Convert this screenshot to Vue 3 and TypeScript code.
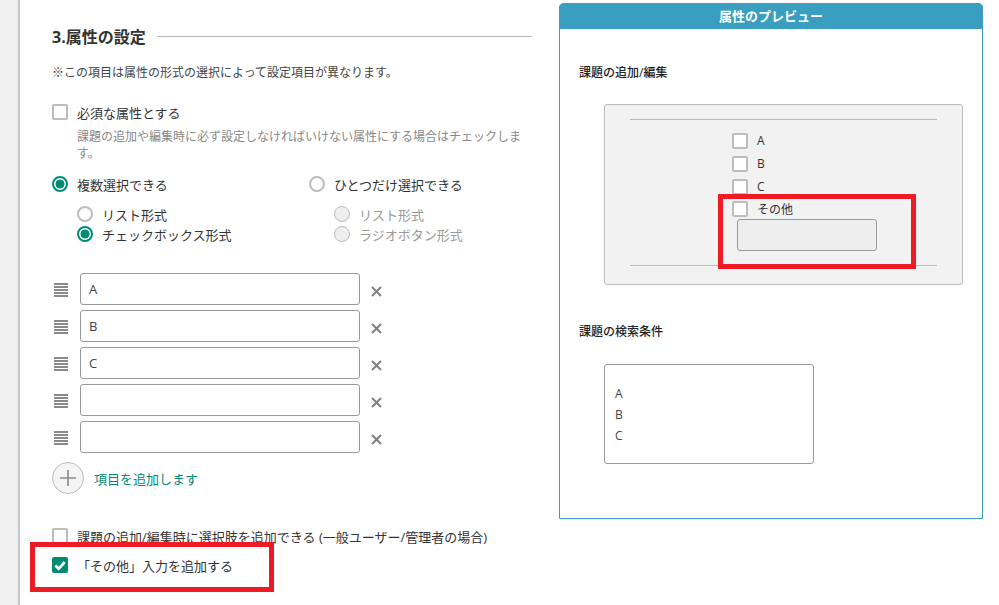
<script setup lang="ts">
const items: string[] = ['A', 'B', 'C', '', '']
const previewItems: string[] = ['A', 'B', 'C']
</script>

<template>
  <div class="page">
    <aside class="rail"></aside>
    <main class="left">
      <div class="heading"><h2>3.属性の設定</h2><span class="rule"></span></div>
      <p class="note">※この項目は属性の形式の選択によって設定項目が異なります。</p>

      <label class="row required"><span class="check"></span><span>必須な属性とする</span></label>
      <p class="desc">課題の追加や編集時に必ず設定しなければいけない属性にする場合はチェックします。</p>

      <div class="modes">
        <div class="mode">
          <div class="row"><span class="radio on"></span><span>複数選択できる</span></div>
          <div class="subs">
            <div class="row"><span class="radio"></span><span>リスト形式</span></div>
            <div class="row"><span class="radio on"></span><span>チェックボックス形式</span></div>
          </div>
        </div>
        <div class="mode">
          <div class="row"><span class="radio"></span><span>ひとつだけ選択できる</span></div>
          <div class="subs disabled">
            <div class="row"><span class="radio off"></span><span>リスト形式</span></div>
            <div class="row"><span class="radio off"></span><span>ラジオボタン形式</span></div>
          </div>
        </div>
      </div>

      <div class="items">
        <div v-for="(item, i) in items" :key="i" class="item">
          <svg class="grip" width="14" height="14" viewBox="0 0 14 14">
            <path d="M0 1h14M0 4h14M0 7h14M0 10h14M0 13h14" stroke="#8a8a8a" stroke-width="2" fill="none" />
          </svg>
          <div class="input">{{ item }}</div>
          <svg class="remove" width="11" height="11" viewBox="0 0 11 11">
            <path d="M1 1l9 9M10 1l-9 9" stroke="#808080" stroke-width="2" fill="none" />
          </svg>
        </div>
      </div>

      <div class="add">
        <span class="plus">
          <svg width="18" height="18" viewBox="0 0 18 18"><path d="M9 1v16M1 9h16" stroke="#8a8a8a" stroke-width="1.6" fill="none" /></svg>
        </span>
        <span class="add-text">項目を追加します</span>
      </div>

      <label class="row option"><span class="check"></span><span>課題の追加/編集時に選択肢を追加できる (一般ユーザー/管理者の場合)</span></label>
      <label class="row option2">
        <span class="check checked">
          <svg width="13" height="11" viewBox="0 0 13 11"><path d="M1.5 5.5l3.6 3.6L11.5 1.8" stroke="#fff" stroke-width="3" fill="none" /></svg>
        </span>
        <span>「その他」入力を追加する</span>
      </label>
      <div class="mark mark-left"></div>
    </main>

    <section class="preview">
      <header>属性のプレビュー</header>
      <div class="preview-body">
        <h3>課題の追加/編集</h3>
        <div class="edit-box">
          <div class="edit-inner">
            <div class="preview-checks">
              <div v-for="p in previewItems" :key="p" class="pcheck"><span class="check"></span><span>{{ p }}</span></div>
              <div class="pcheck other"><span class="check"></span><span>その他</span></div>
              <div class="other-input"></div>
            </div>
          </div>
          <div class="mark mark-right"></div>
        </div>
        <h3 class="second">課題の検索条件</h3>
        <div class="list-box">
          <div v-for="p in previewItems" :key="p" class="list-item">{{ p }}</div>
        </div>
      </div>
    </section>
  </div>
</template>

<style>
html, body { margin: 0; background: #fff; }
</style>

<style scoped>
.page {
  display: flex;
  width: 999px;
  height: 605px;
  overflow: hidden;
  position: relative;
  font-family: "Open Sans", "Noto Sans CJK JP", sans-serif;
  font-size: 13px;
  color: #333;
  background: #fff;
}
.rail { width: 18px; background: #f0f0f0; border-right: 2px solid #c8c8c8; flex: none; }
.left { width: 480px; margin-left: 32px; flex: none; position: relative; padding-top: 25px; }
.heading { display: flex; align-items: center; gap: 11px; height: 22px; }
.heading h2 { margin: 0; font-size: 16px; font-weight: 700; color: #333; white-space: nowrap; }
.rule { flex: 1; height: 1px; background: #b8b8b8; }
.note { margin: 17px 0 0; font-size: 12px; line-height: 18px; color: #444; }
.row { display: flex; align-items: center; gap: 9px; }
.required { margin-top: 21px; height: 18px; }
.desc { margin: 7px 0 0 25px; font-size: 12px; line-height: 17px; color: #888; }
.check {
  width: 16px; height: 16px; box-sizing: border-box; flex: none;
  border: 2px solid #bdbdbd; border-radius: 2px; background: #fff;
  display: inline-flex; align-items: center; justify-content: center;
}
.check.checked { background: #008c72; border-color: #008c72; }
.radio {
  width: 16px; height: 16px; box-sizing: border-box; flex: none;
  border: 2px solid #bdbdbd; border-radius: 50%; background: #fff;
}
.radio.on { border-color: #008c72; background: radial-gradient(circle, #008c72 0 4.2px, #fff 4.8px); }
.radio.off { border: 1px solid #bdbdbd; background: #eee; }
.modes { display: flex; margin-top: 13px; }
.mode { width: 257px; flex: none; }
.mode > .row { height: 18px; }
.subs { margin: 12px 0 0 25px; display: flex; flex-direction: column; gap: 2px; }
.subs .row { height: 18px; }
.disabled { color: #999; }
.items { margin-top: 30px; display: flex; flex-direction: column; gap: 5px; }
.item { display: flex; align-items: center; height: 32px; }
.grip { margin-left: 2px; margin-top: 2px; flex: none; }
.input {
  width: 280px; height: 32px; box-sizing: border-box; margin-left: 12px;
  border: 1px solid #999; border-radius: 3px; padding: 0 8px;
  line-height: 31px; font-size: 13px; color: #444; background: #fff;
}
.remove { margin-left: 11px; margin-top: 4px; flex: none; }
.add { display: flex; align-items: center; gap: 10px; margin-top: 9px; height: 32px; }
.plus {
  width: 32px; height: 32px; box-sizing: border-box; border-radius: 50%;
  border: 1px solid #bdbdbd; background: #f4f4f4;
  display: inline-flex; align-items: center; justify-content: center;
}
.add-text { color: #008c72; }
.option { margin-top: 33px; height: 18px; white-space: nowrap; }
.option2 { margin-top: 11px; height: 18px; }
.mark { position: absolute; border: 5px solid #ed1c24; box-sizing: border-box; pointer-events: none; }
.mark-left { left: -22px; top: 542px; width: 244px; height: 50px; }
.preview {
  position: absolute; left: 559px; top: 3px; width: 424px; height: 516px;
  box-sizing: border-box; border: 1px solid #3a9ec0; border-radius: 5px 5px 0 0;
}
.preview header {
  margin: -1px -1px 0; height: 26px; background: #3a9ec0; color: #fff;
  border-radius: 5px 5px 0 0; text-align: center; font-size: 13px; font-weight: 700; line-height: 26px;
}
.preview-body { padding: 35px 19px 0 19px; }
.preview h3 { margin: 0; font-size: 12px; font-weight: 500; line-height: 18px; color: #222; }
.edit-box {
  position: relative; margin: 22px 0 0 25px; width: 359px; height: 181px; box-sizing: border-box;
  border: 1px solid #bdbdbd; border-radius: 3px; background: #f2f2f2; padding: 14px 25px 0;
}
.edit-inner {
  height: 147px; box-sizing: border-box;
  border-top: 1px solid #bdbdbd; border-bottom: 1px solid #bdbdbd; padding-top: 9px;
}
.preview-checks { margin-left: 102px; }
.pcheck { display: flex; align-items: center; gap: 9px; height: 23px; font-size: 12px; }
.other { height: 21px; }
.other-input {
  width: 140px; height: 32px; box-sizing: border-box; margin: 0 0 0 5px;
  border: 1px solid #999; border-radius: 3px; background: #eee;
}
.mark-right { left: 113px; top: 89px; width: 198px; height: 75px; }
.second { margin-top: 38px !important; }
.list-box {
  margin: 23px 0 0 25px; width: 210px; height: 100px; box-sizing: border-box;
  border: 1px solid #999; border-radius: 3px; padding: 18px 10px 0; background: #fff;
}
.list-item { font-size: 12px; line-height: 21px; color: #444; }
</style>
